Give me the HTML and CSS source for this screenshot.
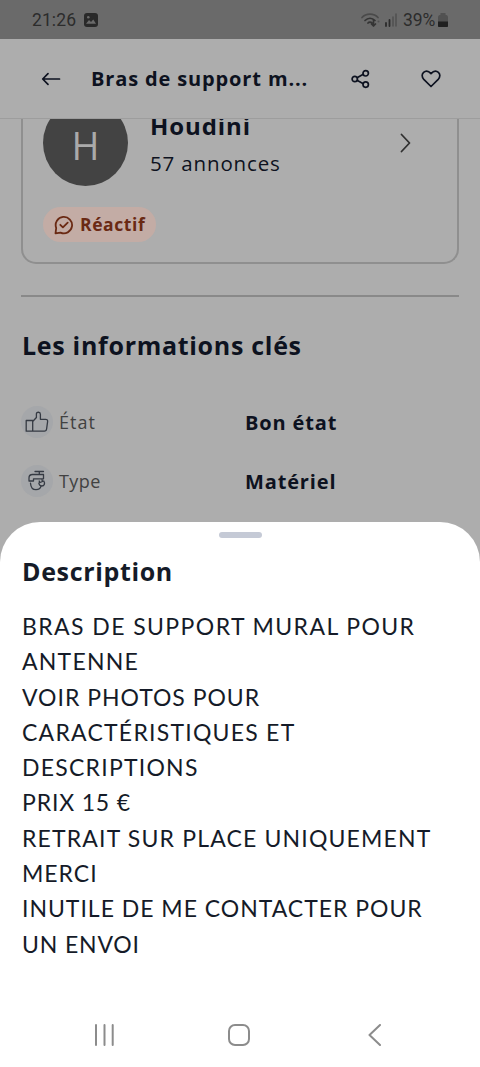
FILE: index.html
```html
<!DOCTYPE html>
<html lang="fr">
<head>
<meta charset="utf-8">
<meta name="viewport" content="width=device-width">
<title>Bras de support mural</title>
<link rel="stylesheet" href="styles.css">
</head>
<body>
<div class="status">
  <span class="time">21:26</span>
  <svg class="photo" width="14" height="14" viewBox="0 0 14 14"><rect width="14" height="14" rx="3" fill="#292929"/><path d="M2 10.800 5 7l2 2 2.300-2.600L12 10.800z" fill="#6a6a6a"/><circle cx="4.300" cy="4.200" r="1.300" fill="#6a6a6a"/></svg>
  <svg class="signal" width="38" height="16" viewBox="0 0 38 16"><g stroke="#4a4a4a" stroke-width="1.700"><path d="M1 5.500C5 1 13 1 17 5.500"/><path d="M4 8.500c3-3 7-3 10 0" stroke="#343434"/><path d="M7 11c1-1.300 3-1.300 4 0M12.500 8v6M10.500 12l2 2 2-2" stroke="#343434"/></g><circle cx="17.500" cy="9.500" r="1" fill="#505050"/><path d="M25 14v-3M28.500 14V8" stroke="#2c2c2c" stroke-width="1.800"/><path d="M32 14V5M35 14V2" stroke="#505050" stroke-width="1.500"/></svg>
  <span class="percent">39%</span>
  <svg class="battery" width="10" height="14" viewBox="0 0 10 14"><path d="M0 14V4Q0 2 2.500 1.800V0h5v1.800Q10 2 10 4v10z" fill="#515151"/><path d="M0 8.500h10V13q0 1-1 1H1q-1 0-1-1z" fill="#202020"/></svg>
</div>
<header class="appbar">
  <svg class="back" width="20" height="14" viewBox="0 0 20 14"><path d="M18.500 7H2M7 1.700 1.700 7 7 12.300"/></svg>
  <h1 class="title">Bras de support m...</h1>
  <svg class="share" width="20" height="20" viewBox="0 0 20 20"><path d="m6 8.700 6.300-3.400M6 11.300l6.300 3.400"/><circle cx="3.800" cy="10" r="2.700"/><circle cx="14.700" cy="4.300" r="2.700"/><circle cx="14.700" cy="15.600" r="2.700"/></svg>
  <svg class="heart" width="20" height="18" viewBox="0 0 20 18"><path d="M10 16.500 2.800 9.300C.6 7 .7 4 2.600 2.300c2.200-1.900 5-1.400 7.400 1.300 2.400-2.700 5.200-3.200 7.400-1.300 1.900 1.700 2 4.700-.2 7z"/></svg>
</header>
<main class="page">
  <section class="seller">
    <div class="seller-row">
      <div class="avatar">H</div>
      <div class="who"><div class="name">Houdini</div><div class="count">57 annonces</div></div>
      <svg class="chevron" width="12" height="20" viewBox="0 0 12 20"><path d="m1.500 1.500 8 8.500-8 8.500"/></svg>
    </div>
    <div class="badge">
      <svg width="20" height="20" viewBox="0 0 20 20"><path d="M1.500 18.400 2.200 13A8.200 8.200 0 1 1 6.500 17.600z"/><path d="m6.300 9.800 2.600 2.600 4.800-4.800"/></svg>
      <span>Réactif</span>
    </div>
  </section>
  <section class="facts">
    <h2 class="facts-title">Les informations clés</h2>
    <div class="fact">
      <span class="bubble"><svg width="24" height="22" viewBox="0 0 24 22"><path d="M1.200 9.500h6.500v10.700H1.200zM7.700 10.500l3.700-4V2.700c0-2 4-2 4 .5V8.300h5.200c1.500 0 2.200 1 2 2.300l-1 7.400c-.2 1.500-1 2.200-2.300 2.200H7.700"/></svg></span>
      <span class="key key-state">État</span><strong class="value">Bon état</strong>
    </div>
    <div class="fact">
      <span class="bubble"><svg width="20" height="22" viewBox="0 0 20 22"><path d="M8 1.500h8.500M12.300 1.500v3M5.500 4.500h11v4.300H6.500V11H2V8c0-2.200 1.200-3.500 3.500-3.500M3.500 13.200c.3 4 2.300 6.500 5.500 6.500 2.700 0 4.500-1.200 5-3.500M11.800 13l5-2c1.500 2.500.5 5-2 5-1.600 0-2.700-1.200-3-3zM12.800 12.400l-.6-1.400M15.600 11.400l-.6-1.400"/></svg></span>
      <span class="key">Type</span><strong class="value">Matériel</strong>
    </div>
  </section>
</main>
<section class="sheet">
  <div class="handle"></div>
  <h2 class="sheet-title">Description</h2>
  <div class="text">
    <div class="wider">BRAS DE SUPPORT MURAL POUR</div>
    <div class="wide">ANTENNE</div>
    <div class="snug">VOIR PHOTOS POUR</div>
    <div class="wide">CARACTÉRISTIQUES ET</div>
    <div class="wide">DESCRIPTIONS</div>
    <div class="tight">PRIX 15 €</div>
    <div>RETRAIT SUR PLACE UNIQUEMENT</div>
    <div class="snug">MERCI</div>
    <div class="snug">INUTILE DE ME CONTACTER POUR</div>
    <div class="tight">UN ENVOI</div>
  </div>
</section>
<nav class="nav">
  <svg width="22" height="22" viewBox="0 0 22 22"><path d="M2 1v20M10.500 1v20M18.700 1v20"/></svg>
  <svg width="22" height="22" viewBox="0 0 22 22"><rect x="1" y="1" width="20" height="20" rx="6"/></svg>
  <svg width="13" height="22" viewBox="0 0 13 22"><path d="M12 1 1.500 11 12 21"/></svg>
</nav>
</body>
</html>
```
FILE: styles.css
```css
* { box-sizing: border-box; }
body { margin: 0; width: 480px; height: 1067px; overflow: hidden; background: #adadad; color: #0d1220; font-family: "Open Sans", "Noto Sans", sans-serif; display: flex; flex-direction: column; }
h1, h2 { margin: 0; font-weight: 700; }
svg { display: block; flex: none; fill: none; stroke-linecap: round; stroke-linejoin: round; }
.status { height: 39px; flex: none; background: #6a6a6a; display: flex; align-items: center; padding: 1px 32px 0; color: #2c2c2c; font: 17.500px/20px Roboto, sans-serif; }
.time { width: 52px; flex: none; letter-spacing: .1px; }
.signal { margin-left: 263px; }
.percent { width: 35px; flex: none; margin-left: 4px; letter-spacing: -.1px; }
.appbar { height: 80px; flex: none; border-bottom: 1px solid #9d9d9d; display: flex; align-items: center; padding-left: 41px; }
.appbar svg { stroke: #0d1220; stroke-width: 1.700; }
.title { width: 260px; margin: 1px 0 0 30px; font-size: 20px; line-height: 24px; letter-spacing: .86px; white-space: nowrap; }
.heart { margin-left: 50px; }
.page { height: 403px; flex: none; padding: 0 21px; overflow: hidden; }
.seller { height: 145px; border: 2px solid #8f8f8f; border-top: 0; border-radius: 0 0 15px 15px; padding-left: 20px; }
.seller-row { height: 67px; display: flex; align-items: flex-end; }
.avatar { width: 85px; height: 86px; border-radius: 50%; background: #434343; color: #aaa; font-size: 38px; line-height: 90px; text-align: center; }
.who { width: 250px; margin-left: 22px; height: 75px; }
.name { font-size: 24px; line-height: 30px; font-weight: 700; letter-spacing: .9px; }
.name, .key, .value { white-space: nowrap; }
.count { margin-top: 9px; font-size: 20.500px; line-height: 26px; letter-spacing: .85px; }
.chevron { stroke: #303030; stroke-width: 1.800; margin-bottom: 33px; }
.badge { width: 113px; height: 35px; margin-top: 21px; border-radius: 18px; background: #c3aca5; color: #6a2913; display: flex; align-items: center; padding-left: 11px; gap: 6px; font-size: 17.500px; font-weight: 700; line-height: 24px; letter-spacing: .6px; }
.badge svg { stroke: #6a2913; stroke-width: 1.800; }
.badge span { margin-top: -1px; }
.facts { margin-top: 31px; border-top: 2px solid #898989; }
.facts-title { margin-top: 32px; font-size: 25px; line-height: 32px; padding-left: 1px; letter-spacing: .7px; }
.fact { display: flex; align-items: center; height: 32px; margin-top: 45px; }
.fact + .fact { margin-top: 27px; }
.bubble { width: 32px; height: 32px; border-radius: 50%; background: #a5a7aa; display: flex; align-items: center; justify-content: center; }
.bubble svg { stroke: #353a43; stroke-width: 1.300; }
.key { width: 186px; margin-left: 6px; color: #414141; font-size: 18px; letter-spacing: .4px; }
.key-state { letter-spacing: 1px; }
.value { font-size: 20px; letter-spacing: .85px; }
.sheet { height: 480px; flex: none; background: #fff; border-radius: 40px 40px 0 0; padding: 10px 22px 0; color: #151b28; }
.handle { width: 43px; height: 6px; border-radius: 3px; background: #c5cad6; margin: 0 auto; }
.sheet-title { margin-top: 17px; font-size: 25px; line-height: 32px; letter-spacing: .65px; }
.text { margin-top: 22px; font-family: Lato, "Open Sans", sans-serif; font-size: 23px; line-height: 35.300px; letter-spacing: 1.170px; white-space: nowrap; }
.wider { letter-spacing: 1.410px; }
.wide { letter-spacing: 1.240px; }
.snug { letter-spacing: .980px; }
.tight { letter-spacing: .840px; }
.nav { height: 65px; flex: none; background: #fff; display: flex; align-items: center; padding: 0 0 0 94px; gap: 112px; }
.nav svg { stroke: #8c8c8c; stroke-width: 2; }
.nav svg:last-child { margin-left: 6px; }
```
